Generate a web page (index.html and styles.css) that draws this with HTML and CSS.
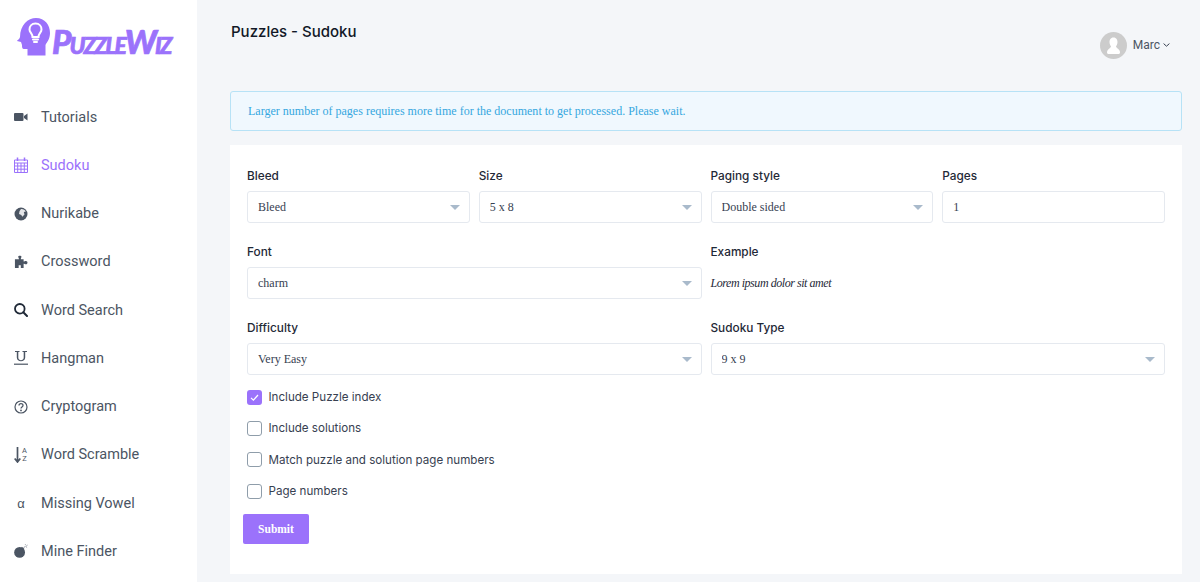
FILE: index.html
```html
<!DOCTYPE html>
<html lang="en">
<head>
<meta charset="utf-8">
<title>PuzzleWiz - Sudoku</title>
<link rel="stylesheet" href="styles.css">
</head>
<body>
<div class="app">
  <aside class="sidebar">
    <div class="logo">
      <svg class="logo-mark" viewBox="0 0 34 38" width="34" height="38">
        <path fill="#9b72fb" d="M3 19 C3 7 11 0 19 0 C28 0 33 7 33 15 C33 21 30 24 28.500 27 L28.500 37.500 L10.500 37.500 L10.500 31 L7 31 C5 31 5 29 5 27 L4 24 L0 23 C0 22 3 21 3 19 Z"/>
        <path fill="none" stroke="#fff" stroke-width="2" d="M18.500 5.500 C14.500 5.500 12.500 8.500 12.500 11.500 C12.500 14.500 15.500 15.500 15.500 19 L21.500 19 C21.500 15.500 24.500 14.500 24.500 11.500 C24.500 8.500 22.500 5.500 18.500 5.500 Z"/>
        <path fill="none" stroke="#fff" stroke-width="2" stroke-linecap="round" d="M16 21.500 H21 M17 24 H20"/>
      </svg>
      <span class="logo-text">PuzzleWiz</span>
    </div>
    <nav class="nav">
      <a class="nav-item"><svg class="nav-icon" viewBox="0 0 14 14"><rect x="0" y="3" width="9.500" height="8" rx="1"/><path d="M10 6 L13.500 3.500 V10.500 L10 8 Z"/></svg>Tutorials</a>
      <a class="nav-item active"><svg class="nav-icon cal" viewBox="0 0 14 16"><path fill="none" stroke="currentColor" stroke-width="1" d="M.5 3 H13.500 V15.500 H.5 Z M.5 6 H13.500 M.5 9 H13.500 M.5 12.200 H13.500 M3.700 6 V15.500 M7 6 V15.500 M10.300 6 V15.500"/><path fill="none" stroke="currentColor" stroke-width="1.500" d="M3.500 .5 V4 M10.500 .5 V4"/></svg>Sudoku</a>
      <a class="nav-item"><svg class="nav-icon" viewBox="0 0 14 14"><circle cx="7" cy="7" r="6.500"/><path fill="#fff" opacity=".85" d="M7 2 C9 1.800 11 3 11.800 4.500 L9.800 5 L10.500 7.500 L8.300 9.800 L7.300 8 L5 7 L5.500 4.200 Z"/></svg>Nurikabe</a>
      <a class="nav-item"><svg class="nav-icon" viewBox="0 0 15 14"><path d="M4.500 1.500 C4.500 0 8 0 8 1.500 C8 2.500 7.300 2.800 7.300 4 H10.300 V6.500 C11.300 6.500 11.500 6 12.800 6 C15 6 15 9.500 12.800 9.500 C11.500 9.500 11.300 9 10.300 9 V13.500 H7.300 V10.500 H5 V13.500 H1 V4 H5.300 C5.300 2.800 4.500 2.500 4.500 1.500 Z"/></svg>Crossword</a>
      <a class="nav-item dark"><svg class="nav-icon" viewBox="0 0 14 14"><circle cx="5.800" cy="5.800" r="4.800" fill="none" stroke="currentColor" stroke-width="1.800"/><path d="M9.300 9.300 L13 13" fill="none" stroke="currentColor" stroke-width="2" stroke-linecap="round"/></svg>Word Search</a>
      <a class="nav-item"><svg class="nav-icon" viewBox="0 0 14 14"><path d="M1 0 H5.500 V1 H4.300 V6.500 C4.300 10 9.700 10 9.700 6.500 V1 H8.500 V0 H13 V1 H11.200 V6.500 C11.200 11.500 2.800 11.500 2.800 6.500 V1 H1 Z"/><rect x="0" y="12.600" width="14" height="1.200"/></svg>Hangman</a>
      <a class="nav-item"><svg class="nav-icon" viewBox="0 0 14 14"><circle cx="7" cy="7" r="6" fill="none" stroke="currentColor" stroke-width="1.200"/><path d="M5 5.500 C5 3 9 3 9 5.400 C9 7 7 7 7 8.500" fill="none" stroke="currentColor" stroke-width="1.300"/><circle cx="7" cy="10.400" r=".9"/></svg>Cryptogram</a>
      <a class="nav-item"><span class="sort-icon"><svg class="sort-arrow" viewBox="0 0 7 16" width="7" height="16"><path d="M3.500 0 V14 M.7 11.500 L3.500 15 L6.300 11.500" fill="none" stroke="currentColor" stroke-width="1.700"/></svg><span class="sort-letters">A<br>Z</span></span>Word Scramble</a>
      <a class="nav-item"><span class="alpha-icon">α</span>Missing Vowel</a>
      <a class="nav-item"><svg class="nav-icon" viewBox="0 0 15 15"><circle cx="6" cy="9" r="5.800"/><path d="M8.500 3 L11.200 5.300 L9.800 7 L7.100 4.700 Z"/><path d="M10.200 4.300 L12.500 2 M12 .3 L12.800 1.300 M14.500 1.200 L13.400 2 M14 3.700 L13 3" fill="none" stroke="#8d939e" stroke-width="1"/></svg>Mine Finder</a>
    </nav>
  </aside>
  <main class="main">
    <header class="topbar">
      <h1 class="title">Puzzles - Sudoku</h1>
      <div class="user">
        <svg class="avatar" viewBox="0 0 27 27"><circle cx="13.500" cy="13.500" r="13.500" fill="#cccccc"/><path fill="#fff" d="M13.500 5.500 C10.500 5.500 9.500 8 9.500 10 C9.500 12 10.500 13.500 11 14.500 C11 16 7 17 7 20.500 C7 21.500 8 22 9 22 H18 C19 22 20 21.500 20 20.500 C20 17 16 16 16 14.500 C16.500 13.500 17.500 12 17.500 10 C17.500 8 16.500 5.500 13.500 5.500 Z"/></svg>
        <span class="user-name">Marc</span>
        <svg class="chevron" viewBox="0 0 7 4" width="7" height="4"><path d="M.6 .6 L3.500 3.200 L6.400 .6" fill="none" stroke="#374151" stroke-width="1"/></svg>
      </div>
    </header>
    <div class="alert">Larger number of pages requires more time for the document to get processed. Please wait.</div>
    <form class="card">
      <div class="grid">
        <div class="field"><label class="label">Bleed</label><div class="select-wrap"><select class="control"><option>Bleed</option></select></div></div>
        <div class="field"><label class="label">Size</label><div class="select-wrap"><select class="control"><option>5 x 8</option></select></div></div>
        <div class="field"><label class="label">Paging style</label><div class="select-wrap"><select class="control"><option>Double sided</option></select></div></div>
        <div class="field"><label class="label">Pages</label><input class="control" type="text" value="1"></div>
        <div class="field span2"><label class="label">Font</label><div class="select-wrap"><select class="control"><option>charm</option></select></div></div>
        <div class="field span2"><label class="label">Example</label><div class="example">Lorem ipsum dolor sit amet</div></div>
        <div class="field span2"><label class="label">Difficulty</label><div class="select-wrap"><select class="control"><option>Very Easy</option></select></div></div>
        <div class="field span2"><label class="label">Sudoku Type</label><div class="select-wrap"><select class="control"><option>9 x 9</option></select></div></div>
      </div>
      <div class="checks">
        <label class="check"><span class="box checked"><svg viewBox="0 0 15 15" width="15" height="15"><path d="M4 7.800 L6.400 10.200 L11 5" fill="none" stroke="#fff" stroke-width="1.200"/></svg></span>Include Puzzle index</label>
        <label class="check"><span class="box"></span>Include solutions</label>
        <label class="check"><span class="box"></span>Match puzzle and solution page numbers</label>
        <label class="check"><span class="box"></span>Page numbers</label>
      </div>
      <button class="submit" type="button">Submit</button>
    </form>
  </main>
</div>
</body>
</html>
```
FILE: styles.css
```css
* { box-sizing: border-box; }
html, body { margin: 0; height: 100%; overflow: hidden; }
body { font-family: "Inter", sans-serif; color: #111827; background: #f4f6f9; }
.app { display: flex; height: 582px; overflow: hidden; }

.sidebar { width: 197px; flex: none; background: #fff; padding: 18px 0 0 14px; }
.logo { display: flex; align-items: flex-end; height: 38px; margin-left: 3px; }
.logo-mark { flex: none; display: block; }
.logo-text { font-family: "Lato", sans-serif; font-weight: 900; font-style: italic; font-variant: small-caps; font-size: 33px; line-height: 30px; color: #9b72fb; letter-spacing: -2px; margin-left: 1px; -webkit-text-stroke: .7px #9b72fb; }
.nav { margin-top: 36px; padding-top: 1px; display: flex; flex-direction: column; }
.nav-item { display: flex; align-items: center; height: 48.250px; font-family: "Roboto", sans-serif; font-size: 14.5px; color: #4b5563; gap: 13px; }
.nav-item.active { color: #9b72fb; }
.nav-icon { width: 14px; height: 14px; flex: none; fill: currentColor; }
.nav-item.dark .nav-icon { color: #1f2937; }
.cal { height: 16px; }
.sort-icon { width: 14px; flex: none; display: flex; align-items: center; gap: 1px; }
.sort-arrow { flex: none; }
.sort-letters { font-size: 7.500px; line-height: 8px; text-align: center; }
.alpha-icon { width: 14px; flex: none; text-align: center; font-family: "Liberation Sans", sans-serif; font-size: 13px; }

.main { flex: 1; min-width: 0; padding: 0 18px 0 33px; }
.topbar { display: flex; justify-content: space-between; height: 91px; }
.title { margin: 22px 0 0 1px; font-size: 15px; line-height: 20px; font-weight: 500; color: #111827; }
.user { display: flex; align-items: center; height: 27px; margin: 32px 12px 0 0; font-family: "Roboto", sans-serif; font-size: 12px; color: #4b5563; }
.avatar { width: 27px; height: 27px; display: block; margin-right: 6px; }
.user-name { padding-bottom: 2px; }
.chevron { margin: 0 0 2px 3px; }
.alert { height: 40px; padding-left: 17px; display: flex; align-items: center; border: 1px solid #b7e2f6; border-radius: 3px; background: #f0f8fe; color: #35a7e0; font-family: "Liberation Serif", serif; font-size: 12.030px; }

.card { margin-top: 14px; height: 429px; padding: 22px 17px 0; background: #fff; }
.grid { display: grid; grid-template-columns: repeat(4, 1fr); column-gap: 9px; row-gap: 20px; }
.span2 { grid-column: span 2; }
.label { display: block; height: 18px; margin-bottom: 6px; font-size: 11.800px; line-height: 18px; font-weight: 500; color: #1f2937; }
.select-wrap { position: relative; }
.select-wrap::after { content: ""; position: absolute; right: 10px; top: 14px; border-left: 5.500px solid transparent; border-right: 5.500px solid transparent; border-top: 5px solid #a9bacb; pointer-events: none; }
.control { display: block; width: 100%; height: 32px; padding: 0 10px; appearance: none; border: 1px solid #e5e9ef; border-radius: 3px; background: #fff; font-family: "Liberation Serif", serif; font-size: 12px; color: #374151; outline: none; }
.example { height: 32px; display: flex; align-items: center; font-family: "Liberation Serif", serif; font-style: italic; font-size: 12px; letter-spacing: -.45px; color: #1f2937; }

.checks { margin-top: 6.500px; display: flex; flex-direction: column; }
.check { display: flex; align-items: center; height: 31.330px; gap: 6.500px; font-size: 11.600px; color: #374151; }
.box { width: 15px; height: 15px; flex: none; border: 1.500px solid #8f9daa; border-radius: 3px; background: #fff; }
.box.checked { border: 0; background: #9b72fb; }
.box svg { display: block; }
.submit { display: block; width: 66px; height: 30px; margin: 7px 0 0 -4px; border: 0; border-radius: 2px; background: #9b72fb; color: #fff; font-family: "Liberation Serif", serif; font-weight: 700; font-size: 11.500px; }
```
